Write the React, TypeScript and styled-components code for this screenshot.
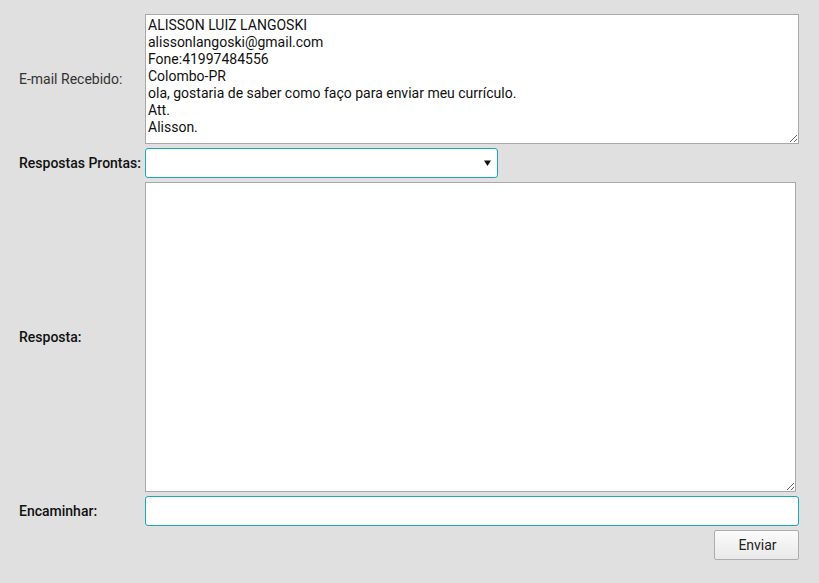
import React from 'react'
import styled, { createGlobalStyle } from 'styled-components'

const GlobalStyle = createGlobalStyle`
  html, body {
    margin: 0;
    padding: 0;
    background: #e0e0e0;
    font-family: Roboto, "Liberation Sans", Arial, sans-serif;
  }
`

const teal = '#1aa9b9'

const Form = styled.form`
  display: grid;
  grid-template-columns: 126px 654px;
  row-gap: 4px;
  padding: 14px 0 0 19px;
  font-size: 14px;
  color: #222;
`

const Label = styled.label<{ $strong?: boolean }>`
  display: flex;
  align-items: center;
  font-weight: ${(p) => (p.$strong ? 500 : 400)};
  color: ${(p) => (p.$strong ? '#111' : '#333')};
`

const TextArea = styled.textarea<{ $height: number; $width?: number }>`
  box-sizing: border-box;
  display: block;
  width: ${(p) => (p.$width ? `${p.$width}px` : '100%')};
  height: ${(p) => p.$height}px;
  margin: 0;
  padding: 2px 2px;
  border: 1px solid #a9a9a9;
  background: #fff;
  font-family: Roboto, "Liberation Sans", Arial, sans-serif;
  font-size: 14px;
  line-height: 17px;
  color: #111;
  resize: both;
  outline: none;
`

const SelectWrap = styled.div`
  position: relative;
  width: 353px;
  height: 30px;
`

const Select = styled.select`
  box-sizing: border-box;
  width: 100%;
  height: 100%;
  margin: 0;
  border: 1px solid ${teal};
  border-radius: 3px;
  background: #fff;
  appearance: none;
  font-family: inherit;
  font-size: 14px;
  outline: none;
`

// seta do select, desenhada porque appearance: none tira a nativa
const Caret = styled.svg`
  position: absolute;
  right: 7px;
  top: 50%;
  transform: translateY(-50%);
  pointer-events: none;
`

const Input = styled.input`
  box-sizing: border-box;
  width: 100%;
  height: 30px;
  margin: 0;
  border: 1px solid ${teal};
  border-radius: 3px;
  background: #fff;
  outline: none;
`

const Actions = styled.div`
  grid-column: 1 / -1;
  display: flex;
  justify-content: flex-end;
`

const Button = styled.button`
  box-sizing: border-box;
  width: 85px;
  height: 30px;
  padding: 0 0 0 2px;
  border: 1px solid #adadad;
  border-radius: 2px;
  background: linear-gradient(#fbfbfb, #e9e9e9);
  font-family: inherit;
  font-size: 14px;
  color: #222;
`

const emailText = `ALISSON LUIZ LANGOSKI
alissonlangoski@gmail.com
Fone:41997484556
Colombo-PR
ola, gostaria de saber como faço para enviar meu currículo.
Att.
Alisson.`

export default function App() {
  return (
    <>
      <GlobalStyle />
      <Form onSubmit={(e) => e.preventDefault()}>
        <Label>E-mail Recebido:</Label>
        <TextArea $height={130} defaultValue={emailText} />

        <Label $strong>Respostas Prontas:</Label>
        <SelectWrap>
          <Select defaultValue="">
            <option value=""></option>
          </Select>
          <Caret width="7" height="7" viewBox="0 0 7 7">
            <path d="M0 1h7L3.5 6.5z" fill="#111" />
          </Caret>
        </SelectWrap>

        <Label $strong>Resposta:</Label>
        <TextArea $height={310} $width={651} />

        <Label $strong>Encaminhar:</Label>
        <Input type="text" />

        <Actions>
          <Button type="submit">Enviar</Button>
        </Actions>
      </Form>
    </>
  )
}
